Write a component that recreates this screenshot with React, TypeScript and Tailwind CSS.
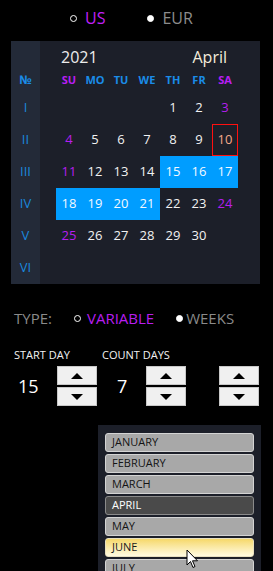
import React from 'react'

const font = { fontFamily: '"Open Sans", "Noto Sans", sans-serif' }

const dayNames = ['SU', 'MO', 'TU', 'WE', 'TH', 'FR', 'SA']
const romans = ['I', 'II', 'III', 'IV', 'V', 'VI']

// April 2021 starts on Thursday
const weeks: (number | null)[][] = [
  [null, null, null, null, 1, 2, 3],
  [4, 5, 6, 7, 8, 9, 10],
  [11, 12, 13, 14, 15, 16, 17],
  [18, 19, 20, 21, 22, 23, 24],
  [25, 26, 27, 28, 29, 30, null],
  [null, null, null, null, null, null, null],
]

const selected = [15, 16, 17, 18, 19, 20, 21]
const months = ['JANUARY', 'FEBRUARY', 'MARCH', 'APRIL', 'MAY', 'JUNE', 'JULY']

function Radio({ filled }: { filled?: boolean }) {
  return (
    <span
      className={`inline-block h-[7px] w-[7px] rounded-full border border-white ${
        filled ? 'bg-white' : 'bg-black'
      }`}
    />
  )
}

function Spinner() {
  return (
    <div className="flex w-[40px] flex-col gap-[2px]">
      <div className="flex h-[19px] items-center justify-center border border-[#c8c8c8] bg-[#f0f0f0]">
        <span className="h-0 w-0 border-x-[6px] border-b-[6px] border-x-transparent border-b-black" />
      </div>
      <div className="flex h-[19px] items-center justify-center border border-[#c8c8c8] bg-[#f0f0f0]">
        <span className="h-0 w-0 border-x-[6px] border-t-[6px] border-x-transparent border-t-black" />
      </div>
    </div>
  )
}

function Cell({ day, col }: { day: number | null; col: number }) {
  const isSel = day !== null && selected.includes(day)
  const isToday = day === 10
  let color = 'text-[#f2f2f2]'
  if (col === 0 || col === 6) color = 'text-[#b41ef0]'
  if (isToday) color = 'text-[#f4a888]'
  if (isSel) color = 'text-[#f4f8ff]'
  return (
    <div
      className={`flex h-[32px] items-center justify-center text-[13px] ${color} ${
        isSel ? 'bg-[#009dff]' : ''
      } ${isToday ? 'border border-[#ff1010]' : ''}`}
    >
      {day ?? ''}
    </div>
  )
}

export default function App() {
  return (
    <div className="relative h-[571px] w-[273px] overflow-hidden bg-black" style={font}>
      {/* Currency */}
      <div className="flex h-[41px] items-start pt-[6px]">
        <div className="ml-[70px] flex items-center gap-[8px]">
          <Radio />
          <span className="text-[16px] text-[#c020f8]">US</span>
        </div>
        <div className="ml-[42px] flex items-center gap-[8px]">
          <Radio filled />
          <span className="text-[16px] text-[#8c8c8c]">EUR</span>
        </div>
      </div>

      {/* Calendar */}
      <div className="ml-[11px] flex h-[243px] w-[249px] bg-[#1c1f29]">
        <div className="flex w-[29px] flex-col bg-[#232a38]">
          <div className="h-[27px]" />
          <div className="flex h-[24px] items-center justify-center text-[12px] font-bold text-[#1a8ce8]">
            №
          </div>
          {romans.map((r) => (
            <div
              key={r}
              className="flex h-[32px] items-center justify-center text-[13px] text-[#1a88dc]"
            >
              {r}
            </div>
          ))}
        </div>
        <div className="ml-[16px] flex w-[182px] flex-col">
          <div className="flex h-[27px] items-end justify-between pl-[5px] pr-[11px] text-[16px] text-[#ececec]">
            <span className="leading-[22px]">2021</span>
            <span className="leading-[22px] text-[#f4ecdc]">April</span>
          </div>
          <div className="grid h-[24px] grid-cols-7">
            {dayNames.map((d, i) => (
              <div
                key={d}
                className={`flex items-center justify-center text-[11px] font-bold ${
                  i === 0 || i === 6 ? 'text-[#b81ef4]' : 'text-[#1a8ce8]'
                }`}
              >
                {d}
              </div>
            ))}
          </div>
          <div className="grid grid-cols-7">
            {weeks.map((w, wi) =>
              w.map((d, ci) => <Cell key={`${wi}-${ci}`} day={d} col={ci} />)
            )}
          </div>
        </div>
      </div>

      {/* Type */}
      <div className="mt-[23px] flex items-center pl-[14px] text-[15px]">
        <span className="text-[#8a8a8a]">TYPE:</span>
        <div className="ml-[22px] flex items-center gap-[6px]">
          <Radio />
          <span className="text-[#b81ef0]">VARIABLE</span>
        </div>
        <div className="ml-[22px] flex items-center gap-[3px]">
          <Radio filled />
          <span className="text-[#8a8a8a]">WEEKS</span>
        </div>
      </div>

      {/* Start day / count */}
      <div className="mt-[17px] flex pl-[14px] text-[11px] text-[#f2f2f2]">
        <span className="w-[88px]">START DAY</span>
        <span>COUNT DAYS</span>
      </div>
      <div className="mt-[3px] flex items-center">
        <span className="ml-[18px] w-[39px] text-[18px] text-white">15</span>
        <Spinner />
        <span className="ml-[20px] w-[29px] text-[18px] text-white">7</span>
        <Spinner />
        <div className="ml-[33px]">
          <Spinner />
        </div>
      </div>

      {/* Months list */}
      <div className="absolute left-[98px] top-[425px] flex h-[160px] w-[163px] flex-col gap-[2px] bg-[#1c1f29] pl-[7px] pt-[8px]">
        {months.map((m) => {
          const isApril = m === 'APRIL'
          const isJune = m === 'JUNE'
          return (
            <div
              key={m}
              className={`flex h-[19px] w-[149px] shrink-0 items-center rounded-[3px] border pl-[6px] text-[11px] ${
                isApril
                  ? 'border-[#8a8a8a] bg-[#4a4a4a] text-white'
                  : isJune
                    ? 'border-[#e8e0c0] bg-gradient-to-b from-[#f6d868] to-[#fffbe0] text-[#1a1a1a]'
                    : 'border-[#d4d4d4] bg-[#a8a8a8] text-[#141414]'
              }`}
            >
              {m}
            </div>
          )
        })}
      </div>

      {/* Mouse cursor */}
      <svg
        className="absolute left-[186px] top-[549px]"
        width="13"
        height="20"
        viewBox="0 0 13 20"
      >
        <path
          d="M1 1 L1 16 L4.5 12.5 L7 18.5 L9 17.5 L6.5 11.8 L11.5 11.8 Z"
          fill="white"
          stroke="black"
          strokeWidth="1"
          strokeLinejoin="round"
        />
      </svg>
    </div>
  )
}
